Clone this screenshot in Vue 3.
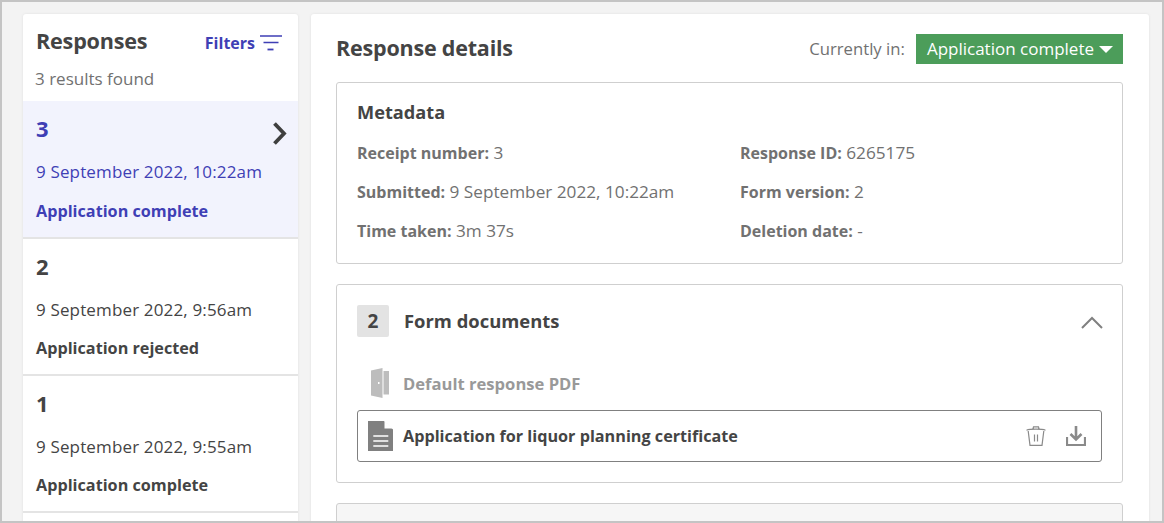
<script setup>
const responses = [
  { id: 3, date: '9 September 2022, 10:22am', status: 'Application complete', active: true },
  { id: 2, date: '9 September 2022, 9:56am', status: 'Application rejected' },
  { id: 1, date: '9 September 2022, 9:55am', status: 'Application complete' },
]
const meta = [
  ['Receipt number:', '3', 'Response ID:', '6265175'],
  ['Submitted:', '9 September 2022, 10:22am', 'Form version:', '2'],
  ['Time taken:', '3m 37s', 'Deletion date:', '-'],
]
</script>

<template>
  <div class="frame">
    <div class="page">
      <aside class="list">
        <div class="list-head">
          <h2>Responses</h2>
          <button class="filters">
            Filters
            <svg width="22" height="16" viewBox="0 0 22 16"><path d="M0 1h22M3.500 7.500h15" stroke="#3f3fb5" stroke-width="1.300" fill="none"/><path d="M7.500 14.500h6" stroke="#3f3fb5" stroke-width="1.800" fill="none"/></svg>
          </button>
        </div>
        <p class="count">3 results found</p>
        <div v-for="r in responses" :key="r.id" class="item" :class="{ active: r.active }">
          <div class="num">{{ r.id }}</div>
          <div class="date">{{ r.date }}</div>
          <div class="status">{{ r.status }}</div>
          <svg v-if="r.active" class="chev" width="15" height="23" viewBox="0 0 15 23"><path d="M2.500 1.500 12 11.500l-9.500 10" stroke="#3f3f3f" stroke-width="3.800" fill="none"/></svg>
        </div>
        <div class="item tail"></div>
      </aside>
      <main class="details">
        <header class="det-head">
          <h1>Response details</h1>
          <div class="current">
            <span>Currently in:</span>
            <button class="badge">Application complete <i class="caret"></i></button>
          </div>
        </header>
        <section class="card meta">
          <h3>Metadata</h3>
          <div class="grid">
            <template v-for="row in meta" :key="row[0]">
              <div><b>{{ row[0] }}</b> {{ row[1] }}</div>
              <div><b>{{ row[2] }}</b> {{ row[3] }}</div>
            </template>
          </div>
        </section>
        <section class="card docs">
          <div class="docs-head">
            <span class="square">2</span>
            <h3>Form documents</h3>
            <svg class="up" width="22" height="13" viewBox="0 0 22 13"><path d="M1 12 11 2l10 10" stroke="#808080" stroke-width="2" fill="none"/></svg>
          </div>
          <div class="doc muted">
            <svg width="20" height="30" viewBox="0 0 20 30"><path d="M1 2.500 12.500 0v30L1 27.500z" fill="#bdbdbd"/><path d="M13.500 3H19v23.500h-5.500z" fill="#bdbdbd"/><rect x="8" y="14" width="1.500" height="2" fill="#fff"/></svg>
            <span>Default response PDF</span>
          </div>
          <div class="doc boxed">
            <svg width="26" height="30" viewBox="0 0 26 30"><path d="M0 0h16l9 8.500V30H0z" fill="#808080"/><path d="M16.500 0l8.500 7.500h-8.500z" fill="#fff"/><path d="M5.300 15h15M5.300 20h15M5.300 25h15" stroke="#fff" stroke-width="1.700"/></svg>
            <span>Application for liquor planning certificate</span>
            <div class="actions">
              <svg width="20" height="20" viewBox="0 0 20 20"><path d="M.5 4.200C4 2.800 16 2.800 19.500 4.200M7 2.800 7.500.8h5l.5 2M2.200 5 4 19.300h12L17.800 5M8.500 8.500v7M11.500 8.500v7" stroke="#8a8a8a" stroke-width="1.200" fill="none"/></svg>
              <svg width="20" height="20" viewBox="0 0 20 20"><path d="M1 11v8h18v-8" stroke="#8a8a8a" stroke-width="2.200" fill="none"/><path d="M10 0v13M4.500 8l5.500 5.500L15.500 8" stroke="#8a8a8a" stroke-width="2.600" fill="none"/></svg>
            </div>
          </div>
        </section>
        <section class="card next"></section>
      </main>
    </div>
  </div>
</template>

<style>
html, body { margin: 0; height: 100%; overflow: hidden; }
</style>
<style scoped>
.frame {
  height: 523px; box-sizing: border-box; border: 2px solid #c4c4c4; background: #f3f3f3;
  overflow: hidden; font-family: "Open Sans", "Noto Sans", sans-serif; color: #444;
}
.page { display: flex; align-items: flex-start; gap: 13px; padding: 12px 13px 0 21px; }
h1, h2, h3, p { margin: 0; }
.list { width: 275px; flex: none; background: #fff; border-radius: 3px 3px 0 0; box-shadow: 0 0 3px rgba(0,0,0,.08); }
.list-head { display: flex; align-items: center; justify-content: space-between; padding: 13px 16px 0 13px; height: 30px; }
.list-head h2 { font-size: 21.600px; font-weight: 700; letter-spacing: -.2px; color: #444; margin-top: -4px; }
.filters { display: flex; align-items: center; gap: 5px; padding: 0; margin-top: 1px; border: 0; background: none; font: 700 16px "Open Sans", sans-serif; color: #3f3fb5; }
.count { padding: 10px 12px 0; height: 34px; font-size: 17px; line-height: 24px; color: #717171; }
.item { position: relative; height: 137px; box-sizing: border-box; border-bottom: 2px solid #e4e4e4; padding: 12px 13px 0; }
.item.active { height: 138px; padding-top: 12px; background: #f2f3fd; color: #3f3fb5; }
.item.tail { height: 10px; padding: 0; }
.num { font-size: 22px; font-weight: 700; line-height: 30px; }
.date { margin-top: 17px; font-size: 17px; line-height: 24px; letter-spacing: .15px; }
.status { margin-top: 14px; font-size: 16.200px; font-weight: 700; line-height: 24px; }
.active .status { margin-top: 15px; }
.chev { position: absolute; top: 21px; right: 11px; }
.details { flex: 1; background: #fff; padding: 20px 26px 0 25px; border-radius: 3px 3px 0 0; box-shadow: 0 0 3px rgba(0,0,0,.08); height: 520px; box-sizing: border-box; }
.det-head { display: flex; justify-content: space-between; align-items: center; height: 30px; }
.det-head h1 { font-size: 21.500px; font-weight: 700; letter-spacing: -.2px; color: #444; margin-top: -3px; }
.current { display: flex; align-items: center; gap: 11px; font-size: 16.700px; color: #717171; margin-top: -1px; }
.badge { display: flex; align-items: center; gap: 5px; height: 30px; padding: 0 10px 0 11px; margin-top: 1px; border: 0; background: #4c9d5a; color: #fff; font: 17px/26px "Open Sans", sans-serif; }
.caret { width: 0; height: 0; border: 7px solid transparent; border-top: 7px solid #fff; border-bottom: 0; }
.card { border: 1px solid #cfcfcf; border-radius: 3px; box-sizing: border-box; }
.meta { margin-top: 18px; height: 182px; padding: 16px 20px 0; }
.meta h3 { font-size: 18.200px; font-weight: 700; line-height: 26px; }
.grid { display: grid; grid-template-columns: 383px 1fr; grid-auto-rows: 39px; margin-top: 16px; font-size: 17.200px; line-height: 24px; color: #717171; }
.grid b { font-weight: 700; font-size: 16px; }
.docs { margin-top: 20px; height: 199px; padding: 20px 20px 0; }
.docs-head { display: flex; align-items: center; height: 32px; }
.square { width: 32px; height: 32px; border-radius: 2px; background: #e3e3e3; font-size: 19px; font-weight: 700; display: flex; align-items: center; justify-content: center; }
.docs-head h3 { margin-left: 15px; margin-top: -2px; font-size: 18.400px; font-weight: 700; }
.up { margin-left: auto; margin-right: -1px; margin-top: 3px; }
.doc { display: flex; align-items: center; font-size: 16.200px; font-weight: 700; }
.doc span { margin-left: 9px; }
.muted { margin-top: 31px; margin-bottom: 12px; height: 30px; padding-left: 13px; color: #999; font-size: 16.600px; }
.muted span { margin: 1px 0 0 13px; }
.boxed { height: 52px; box-sizing: border-box; border: 1px solid #808080; border-radius: 3px; padding: 0 15px 0 10px; color: #444; }
.actions { margin-left: auto; display: flex; align-items: center; gap: 20px; }
.next { margin-top: 20px; height: 40px; background: #f6f6f6; }
</style>
